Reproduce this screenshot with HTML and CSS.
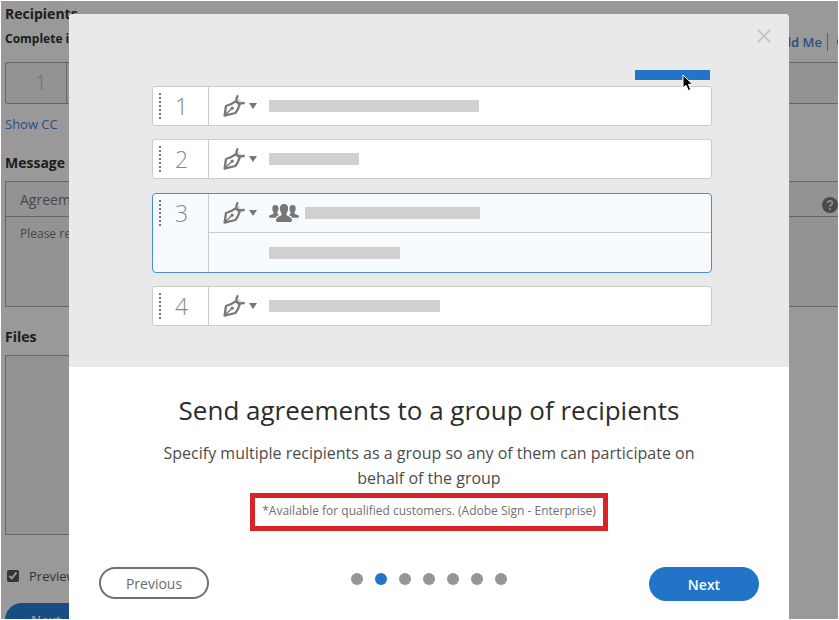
FILE: index.html
```html
<!DOCTYPE html>
<html lang="en">
  <head>
    <meta charset="UTF-8" />
    <meta name="viewport" content="width=device-width, initial-scale=1.0" />
    <link rel="stylesheet" href="styles.css">
    <title>Send agreements</title>
  </head>
  <body>
    <!-- shared icons -->
    <svg class="sprite" aria-hidden="true">
      <symbol id="pen" viewBox="0 0 22 22">
        <path d="M15.2 2.8 L19.4 7.4 L15.6 8 L13.6 6 Z" fill="#ddd" />
        <path d="M1.6 20.6 L3 11 Q8.5 9.6 13 6.2 L16.6 9.8 Q15 14.8 12.4 18 Z" fill="none" stroke="#777" stroke-width="2.3" stroke-linejoin="round" />
        <path d="M2 20 L8.5 13.8" stroke="#777" stroke-width="1.4" />
        <circle cx="9.2" cy="13.2" r="1.6" fill="#777" />
        <path d="M14.4 1.2 Q12.6 4.4 13.8 6.6 Q15.4 9 20.8 8" fill="none" stroke="#777" stroke-width="2.3" stroke-linecap="round" />
      </symbol>
    </svg>

    <div class="page">
      <main class="form">
        <h2>Recipients</h2>
        <div class="bar">
          <h3>Complete in Order</h3>
          <div class="links">
            <a href="#">Add Me</a>
            <span class="more">
              <svg viewBox="0 0 12 12"><circle cx="6" cy="6" r="5" fill="none" stroke="#777" stroke-width="2" /></svg>
            </span>
          </div>
        </div>
        <div class="recipient"><span class="order">1</span></div>
        <a href="#" class="cc">Show CC</a>

        <h2 class="messageTitle">Message</h2>
        <div class="message">
          <input type="text" aria-label="Agreement name" value="Agreement Name" />
          <textarea aria-label="Message">Please review and complete this document.</textarea>
          <svg class="help" viewBox="0 0 16 16">
            <circle cx="8" cy="8" r="8" fill="#7c7c7c" />
            <path d="M5.6 6.2 Q5.8 3.9 8.1 3.9 Q10.5 4 10.4 6 Q10.3 7.2 9 7.9 Q8 8.5 8 9.8" fill="none" stroke="#e6e6e6" stroke-width="1.8" />
            <circle cx="8" cy="12.1" r="1.1" fill="#e6e6e6" />
          </svg>
        </div>

        <h2 class="filesTitle">Files</h2>
        <div class="files"></div>

        <label class="preview">
          <input type="checkbox" checked />
          Preview
        </label>
        <button class="submitBtn">Next</button>
      </main>

      <div class="overlay">
        <section class="modal" role="dialog" aria-labelledby="title">
          <div class="hero">
            <button class="closeBtn" aria-label="Close">
              <svg viewBox="0 0 14 14"><path d="M0.5 0.5 L13.5 13.5 M13.5 0.5 L0.5 13.5" stroke="#c4c4c4" stroke-width="1.8" /></svg>
            </button>
            <div class="tab">
              <svg class="cursor" viewBox="0 0 12 18">
                <path d="M1 1 V14 L4 11.2 L6.3 16.6 L8.8 15.5 L6.5 10.3 H10.6 Z" fill="#000" stroke="#fff" stroke-width="1" />
              </svg>
            </div>
            <div class="rows">
              <div class="row">
                <div class="num"><i class="grip"></i>1</div>
                <div class="lines">
                  <div class="line"><svg class="pen"><use href="#pen" /></svg><i class="arrow"></i><i class="text w210"></i></div>
                </div>
              </div>
              <div class="row">
                <div class="num"><i class="grip"></i>2</div>
                <div class="lines">
                  <div class="line"><svg class="pen"><use href="#pen" /></svg><i class="arrow"></i><i class="text w90"></i></div>
                </div>
              </div>
              <div class="row active">
                <div class="num"><i class="grip"></i>3</div>
                <div class="lines">
                  <div class="line">
                    <svg class="pen"><use href="#pen" /></svg><i class="arrow"></i>
                    <svg class="group" viewBox="0 0 30 18" fill="#777">
                      <path d="M6.5 1 C8.8 1 9.7 2.8 9.5 5 C9.4 6.8 8.6 7.8 8.3 8.8 C8.3 10.2 9.6 10.4 10.2 11 C8.4 11.7 7.3 12.4 6.8 13.8 H1 Q0 13.8 0 12.7 C0 10.6 3.8 10.6 4.6 9.5 C4.9 8.4 3.5 7.4 3.3 5 C3.1 2.6 4.2 1 6.5 1 Z" />
                      <path d="M23.5 1 C21.2 1 20.3 2.8 20.5 5 C20.6 6.8 21.4 7.8 21.7 8.8 C21.7 10.2 20.4 10.4 19.8 11 C21.6 11.7 22.7 12.4 23.2 13.8 H29 Q30 13.8 30 12.7 C30 10.6 26.2 10.6 25.4 9.5 C25.1 8.4 26.5 7.4 26.7 5 C26.9 2.6 25.8 1 23.5 1 Z" />
                      <path d="M15 0 C18 0 19.4 2.2 19.1 5.2 C18.9 7.6 17.8 8.8 17.3 10 C17 12.8 23 12 23 16.6 Q23 18 21.7 18 H8.3 Q7 18 7 16.6 C7 12 13 12.8 12.7 10 C12.2 8.8 11.1 7.6 10.9 5.2 C10.6 2.2 12 0 15 0 Z" />
                    </svg>
                    <i class="text w175"></i>
                  </div>
                  <div class="line second"><i class="text w131"></i></div>
                </div>
              </div>
              <div class="row">
                <div class="num"><i class="grip"></i>4</div>
                <div class="lines">
                  <div class="line"><svg class="pen"><use href="#pen" /></svg><i class="arrow"></i><i class="text w171"></i></div>
                </div>
              </div>
            </div>
          </div>

          <div class="content">
            <h1 id="title">Send agreements to a group of recipients</h1>
            <p>Specify multiple recipients as a group so any of them can participate on behalf of the group</p>
            <div class="note">*Available for qualified customers. (Adobe Sign - Enterprise)</div>
          </div>

          <div class="footer">
            <button class="prevBtn">Previous</button>
            <div class="dots">
              <i></i><i class="on"></i><i></i><i></i><i></i><i></i><i></i>
            </div>
            <button class="nextBtn">Next</button>
          </div>
        </section>
      </div>
    </div>
  </body>
</html>
```
FILE: styles.css
```css
* {
  box-sizing: border-box;
  font-family: "Open Sans", "Noto Sans", sans-serif;
}
body {
  margin: 0;
  padding: 1px;
  background: #fff;
}
h1,
h2,
h3,
p {
  margin: 0;
}
a {
  color: #4884d8;
  text-decoration: none;
}
button {
  cursor: pointer;
  padding: 0;
  border: none;
}
.sprite {
  position: absolute;
  width: 0;
  height: 0;
}
.page {
  position: relative;
  height: calc(100vh - 2px);
  overflow: hidden;
}

/* form behind the dialog */
.form {
  padding: 3px 0 0 4px;
  color: #333;
  font-size: 13px;
}
.form h2 {
  font-size: 14px;
  font-weight: 700;
  line-height: 20px;
}
.form h3 {
  font-size: 12px;
  font-weight: 700;
  line-height: 20px;
}
.bar {
  display: flex;
  justify-content: space-between;
  align-items: center;
  height: 30px;
}
.links {
  display: flex;
  gap: 5px;
  font-weight: 600;
  margin-top: 6px;
}
.more {
  display: flex;
  align-items: center;
  width: 11px;
  padding-left: 9px;
  border-left: 1px solid #999;
  overflow: hidden;
}
.more svg {
  flex: none;
  width: 12px;
  height: 12px;
}
.recipient {
  display: flex;
  height: 42px;
  margin-top: 8px;
  border: 1px solid #aaa;
  border-right: none;
  border-radius: 3px 0 0 3px;
  background: #f5f5f5;
}
.order {
  width: 61px;
  padding-left: 10px;
  border-right: 1px solid #aaa;
  color: #bbb;
  font-size: 20px;
  font-weight: 300;
  line-height: 40px;
  text-align: center;
}
.cc {
  display: block;
  font-weight: 500;
  line-height: 20px;
  margin-top: 10px;
}
.form .messageTitle {
  margin-top: 19px;
}
.message {
  position: relative;
  display: flex;
  flex-direction: column;
  height: 126px;
  margin-top: 8px;
  border: 1px solid #aaa;
  border-right: none;
  background: #f5f5f5;
}
.message input,
.message textarea {
  border: none;
  outline: none;
  background: none;
  color: #777;
  padding: 0 14px;
  font-weight: 500;
}
.message input {
  height: 35px;
  border-bottom: 1px solid #aaa;
  font-size: 14px;
}
.message textarea {
  flex: 1;
  padding-top: 8px;
  font-size: 12px;
  resize: none;
}
.help {
  position: absolute;
  top: 15px;
  right: 0;
  width: 16px;
  height: 16px;
}
.form .filesTitle {
  margin-top: 20px;
}
.files {
  width: 80%;
  height: 180px;
  margin-top: 8px;
  border: 1px solid #aaa;
  background: #f5f5f5;
}
.preview {
  display: flex;
  align-items: center;
  gap: 10px;
  height: 20px;
  margin: 31px 0 17px 2px;
  color: #555;
  font-weight: 500;
}
.preview input {
  width: 12px;
  height: 12px;
  margin: 0;
  accent-color: #555;
}
.submitBtn {
  width: 82px;
  height: 34px;
  border-radius: 17px;
  background: #2680d9;
  color: #fff;
  font-size: 13px;
  font-weight: 600;
}

/* dialog */
.overlay {
  position: absolute;
  inset: 0;
  padding: 13px 49px 0 68px;
  background: rgba(0, 0, 0, 0.4);
}
.modal {
  min-height: 640px;
  border-radius: 4px;
  background: #fff;
  overflow: hidden;
}
.hero {
  position: relative;
  padding: 56px 77px 41px 83px;
  background: #e9e9e9;
}
.closeBtn {
  position: absolute;
  top: 15px;
  right: 18px;
  width: 14px;
  height: 14px;
  background: none;
}
.closeBtn svg {
  display: block;
}
.tab {
  position: relative;
  width: 75px;
  height: 10px;
  margin: 0 2px 6px auto;
  background: #2174c7;
}
.cursor {
  position: absolute;
  top: 4px;
  left: 47px;
  width: 12px;
  height: 18px;
}
.rows {
  display: flex;
  flex-direction: column;
  gap: 13px;
}
.row {
  display: flex;
  border: 1px solid #ccc;
  border-radius: 3px;
  background: #fff;
}
.num {
  display: flex;
  gap: 14px;
  width: 55px;
  height: 38px;
  padding-left: 6px;
  color: #888;
  font-size: 23px;
  font-weight: 300;
  line-height: 38px;
}
.grip {
  height: 26px;
  margin-top: 6px;
  width: 2px;
  background: repeating-linear-gradient(#777 0 2px, transparent 2px 4px);
}
.lines {
  flex: 1;
  border-left: 1px solid #ccc;
}
.line {
  display: flex;
  align-items: center;
  height: 38px;
  padding-left: 14px;
}
.pen {
  width: 22px;
  height: 22px;
}
.arrow {
  margin: 0 12px 0 4px;
  border: 4px solid transparent;
  border-top: 6px solid #777;
  border-bottom: none;
}
.text {
  height: 12px;
  background: #d0d0d0;
}
.w210 {
  width: 210px;
}
.w90 {
  width: 90px;
}
.w175 {
  width: 175px;
}
.w131 {
  width: 131px;
}
.w171 {
  width: 171px;
}
.active {
  margin-top: 1px;
  border-color: #4a8ccc;
  border-radius: 4px;
  background: #f7fbfe;
}
.group {
  width: 30px;
  height: 18px;
  margin-right: 6px;
}
.second {
  height: 40px;
  padding-left: 60px;
  border-top: 1px solid #ccc;
}
.content {
  display: flex;
  flex-direction: column;
  align-items: center;
  padding: 24px 80px 0;
  text-align: center;
}
.content h1 {
  color: #2c2c2c;
  font-size: 26px;
  font-weight: 400;
  line-height: 38px;
}
.content p {
  margin-top: 12px;
  color: #4b4b4b;
  font-size: 16px;
  font-weight: 500;
  line-height: 25px;
}
.note {
  margin-top: 2px;
  padding: 3px 7px 5px;
  border: 5px solid #d9232a;
  color: #707070;
  font-size: 12px;
  font-weight: 500;
  line-height: 20px;
}
.footer {
  display: flex;
  justify-content: space-between;
  align-items: flex-start;
  padding: 36px 30px 0;
}
.prevBtn,
.nextBtn {
  width: 110px;
  height: 34px;
  border-radius: 17px;
  font-size: 14px;
  font-weight: 500;
}
.prevBtn {
  height: 32px;
  border: 2px solid #707070;
  background: #fff;
  color: #6b6b6b;
}
.nextBtn {
  background: #2174c7;
  color: #fff;
  font-weight: 600;
}
.dots {
  display: flex;
  gap: 12px;
  margin-top: 6px;
}
.dots i {
  width: 12px;
  height: 12px;
  border-radius: 50%;
  background: #959595;
}
.dots .on {
  background: #2174c7;
}
```
